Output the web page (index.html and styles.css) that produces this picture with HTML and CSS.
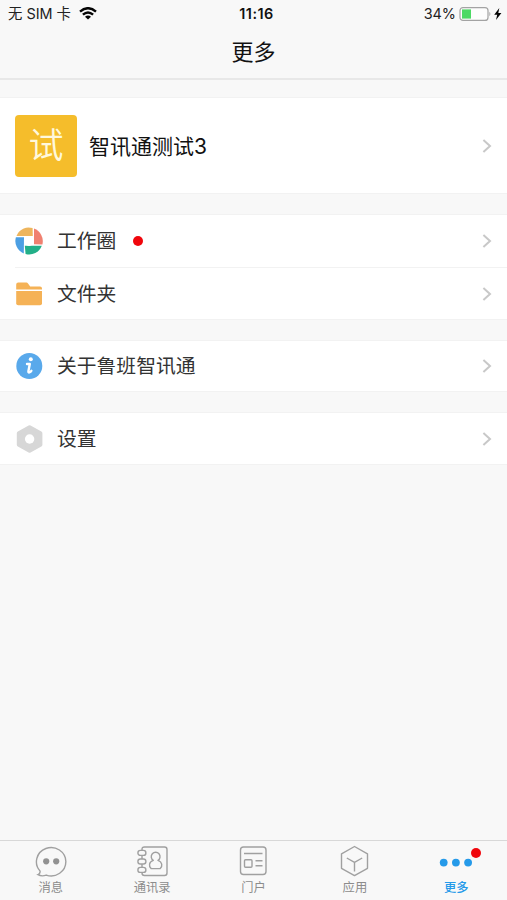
FILE: index.html
```html
<!DOCTYPE html>
<html lang="zh-CN">
<head>
<meta charset="utf-8">
<title>更多</title>
<link rel="stylesheet" href="styles.css">
</head>
<body>
<div class="app">
  <header class="header">
    <div class="status">
      <div class="status-left"><span>无 SIM 卡</span>
        <svg class="wifi" width="18" height="13" viewBox="0 0 18 13" fill="none" stroke="#050505" stroke-width="2.4"><path d="M1 4.6Q9-2.2 17 4.6"/><path d="M3.9 7.7Q9 3.3 14.1 7.7"/><path d="M9 12.4 6 9.7Q9 7.3 12 9.7Z" fill="#050505" stroke="none"/></svg>
      </div>
      <div class="clock">11:16</div>
      <div class="status-right"><span>34%</span>
        <svg width="43" height="16" viewBox="0 0 43 16"><rect x="1" y="1.6" width="28" height="12.8" rx="3" fill="#fdfdfd" stroke="#a3a3a3" stroke-width="1.2"/><rect x="3" y="3.4" width="9" height="9.2" fill="#4cd964"/><path d="M30.4 5.8q2 2.2 0 4.4z" fill="#a3a3a3"/><path d="M40.3 2 35.2 8.8h3L37 14 42.4 7h-3.1z" fill="#050505"/></svg>
      </div>
    </div>
    <h1 class="title">更多</h1>
  </header>
  <main class="content">
    <section class="group">
      <div class="profile">
        <div class="avatar">试</div>
        <span class="name">智讯通测试3</span>
        <svg class="chevron" viewBox="0 0 10 14"><path d="M1.4 1.1 8 7 1.4 12.9"/></svg>
      </div>
    </section>
    <section class="group">
      <div class="row first">
        <svg class="icon" viewBox="0 0 28 28"><path d="M4.5 4.3A13.4 13.4 0 0 1 17.6 1L17.8 9H1.5Q2.4 6.2 4.5 4.3Z" fill="#eeb55d"/><path d="M19 1.6A13.4 13.4 0 0 1 27.4 17.5L19 17.3Z" fill="#f08070"/><path d="M9.8 18.8H26.8A13.4 13.4 0 0 1 10.6 27Z" fill="#22af88"/><path d="M.9 10.2H9L8.8 26.4A13.4 13.4 0 0 1 .9 10.2Z" fill="#4c9fe3"/><circle cx="14" cy="14" r="5" fill="#fff"/></svg>
        <span>工作圈</span><i class="dot"></i>
        <svg class="chevron" viewBox="0 0 10 14"><path d="M1.4 1.1 8 7 1.4 12.9"/></svg>
      </div>
      <div class="row">
        <svg class="icon" viewBox="0 0 28 28" fill="#f5b256"><path d="M1.2 9.4V4.6q0-2 2-2h8.2q1 0 1.6.8l2.2 3H25q2 0 2 2v1Z"/><path d="M1.2 11H27v12.2q0 2-2 2H3.2q-2 0-2-2Z"/></svg>
        <span>文件夹</span>
        <svg class="chevron" viewBox="0 0 10 14"><path d="M1.4 1.1 8 7 1.4 12.9"/></svg>
      </div>
    </section>
    <section class="group">
      <div class="row about">
        <svg class="icon" viewBox="0 0 28 28"><circle cx="14.3" cy="14" r="13" fill="#59a9eb"/><circle cx="15.8" cy="7.3" r="2" fill="#fff"/><path d="M12 12h2.8L13.4 19.3q-.2 1.4 1 1.1 1.3-.3 2-1.6" fill="none" stroke="#fff" stroke-width="2.4" stroke-linejoin="round" stroke-linecap="round"/></svg>
        <span>关于鲁班智讯通</span>
        <svg class="chevron" viewBox="0 0 10 14"><path d="M1.4 1.1 8 7 1.4 12.9"/></svg>
      </div>
    </section>
    <section class="group">
      <div class="row">
        <svg class="icon" viewBox="0 0 28 28"><path d="M14.6 2.2 25.4 8.2V19.8L14.6 25.8 3.8 19.8V8.2Z" fill="#d7d7d7" stroke="#d7d7d7" stroke-width="4" stroke-linejoin="round"/><circle cx="14.6" cy="14" r="4.7" fill="#fff"/></svg>
        <span>设置</span>
        <svg class="chevron" viewBox="0 0 10 14"><path d="M1.4 1.1 8 7 1.4 12.9"/></svg>
      </div>
    </section>
  </main>
  <nav class="tabs">
    <div class="tab">
      <svg viewBox="0 0 34 34"><path d="M6.1 27.1A14.7 14.2 0 1 1 12.2 31.1C9.5 32.1 6 31.8 4 30.7Q6.2 30 6.1 27.1Z"/><g fill="#929292" stroke="none"><circle cx="12.2" cy="17.3" r="3.1"/><circle cx="22.2" cy="17.3" r="3.1"/></g></svg>
      <span>消息</span>
    </div>
    <div class="tab">
      <svg viewBox="0 0 34 34"><path d="M7 6V5.5Q7 3 9.5 3H29.5Q32 3 32 5.5V29Q32 31.5 29.5 31.5H9.5Q7 31.5 7 29V28.3M7 11.5V15M7 20V23.5"/><rect x="2.9" y="6.4" width="8" height="5" rx="2.5"/><rect x="2.9" y="15" width="8" height="5" rx="2.5"/><rect x="2.9" y="23.4" width="8" height="5" rx="2.5"/><path d="M18.3 16.4A4.4 4.4 0 1 1 23 16.4C27.4 18 27.8 22 25.2 24.6H16.1C13.5 22 13.9 18 18.3 16.4Z" stroke-linejoin="round"/></svg>
      <span>通讯录</span>
    </div>
    <div class="tab">
      <svg viewBox="0 0 34 34"><rect x="4.5" y="3" width="25.5" height="27.5" rx="3"/><path d="M8 9.5H26.5M19.5 16.7H26.5M19.5 21.7H26.5"/><rect x="8.5" y="15.7" width="7.5" height="7.5" rx="1"/></svg>
      <span>门户</span>
    </div>
    <div class="tab">
      <svg viewBox="0 0 34 34" stroke-linejoin="round"><path d="M16.5 2.5 29.5 9.8V24.3L16.5 31.6 3.5 24.3V9.8Z"/><path d="M8.8 14 16.5 18.3 24.2 14M16.5 18.3V27.5"/></svg>
      <span>应用</span>
    </div>
    <div class="tab active">
      <svg viewBox="0 0 34 34"><g fill="#259ae9" stroke="none"><circle cx="4.7" cy="18.6" r="3.9"/><circle cx="16.9" cy="18.6" r="3.9"/><circle cx="29.1" cy="18.6" r="3.9"/></g></svg>
      <span>更多</span><i class="badge"></i>
    </div>
  </nav>
</div>
</body>
</html>
```
FILE: styles.css
```css
* { box-sizing: border-box; }
body { margin: 0; background: #f8f8f8; font-family: Inter, "Noto Sans CJK SC", sans-serif; color: #333; }
.app { height: 900px; display: flex; flex-direction: column; }
.header { height: 80px; border-bottom: 2px solid #e8e8e8; }
.status { height: 27px; padding: 0 5px 0 8px; display: grid; grid-template-columns: 1fr auto 1fr; align-items: center; font-size: 14.4px; line-height: 20px; color: #222; }
.status-left, .status-right { display: flex; align-items: center; }
.status-left { gap: 8px; }
.status-right { justify-content: flex-end; gap: 3px; }
.clock { padding-left: 3px; font-weight: 600; letter-spacing: .5px; color: #111; }
.title { margin: 8px 0 0; font-size: 22px; line-height: 34px; font-weight: 400; text-align: center; color: #111; }
.content { flex: 1; padding-top: 17px; display: flex; flex-direction: column; gap: 20px; }
.group { background: #fff; border-top: 1px solid #f2f2f2; border-bottom: 1px solid #f2f2f2; }
.profile { height: 95px; padding: 1px 15px 0; display: flex; align-items: center; }
.avatar { width: 62px; height: 62px; margin-right: 12px; border-radius: 4px; background: #f5bd2b; color: #fff8dc; font-size: 35px; line-height: 61px; text-align: center; font-weight: 350; }
.name { padding-top: 1px; font-size: 21px; line-height: 30px; color: #111; }
.row { height: 51px; padding: 0 15px; display: flex; align-items: center; font-size: 19.8px; line-height: 28px; }
.row.first { height: 53px; padding-bottom: 2px; background: linear-gradient(#f2f2f2, #f2f2f2) 15px 100% / 100% 1px no-repeat; }
.row.about { height: 50px; }
.icon { width: 28px; height: 28px; margin-right: 14px; }
.chevron { width: 10px; height: 14px; margin-left: auto; fill: none; stroke: #c8c8c8; stroke-width: 2; }
.dot { width: 10px; height: 10px; margin-left: 17px; border-radius: 50%; background: #f0060c; }
.tabs { height: 60px; border-top: 1px solid #d8d8d8; display: grid; grid-template-columns: repeat(5, 1fr); }
.tab { position: relative; padding-top: 3px; display: flex; flex-direction: column; align-items: center; font-size: 12.3px; line-height: 19px; color: #8c8c8c; }
.tab svg { width: 34px; height: 34px; fill: none; stroke: #a0a0a0; stroke-width: 1.4; }
.tab.active { color: #259ae9; font-weight: 500; }
.badge { position: absolute; top: 7px; right: 26px; width: 10px; height: 10px; border-radius: 50%; background: #f0060c; }
```
